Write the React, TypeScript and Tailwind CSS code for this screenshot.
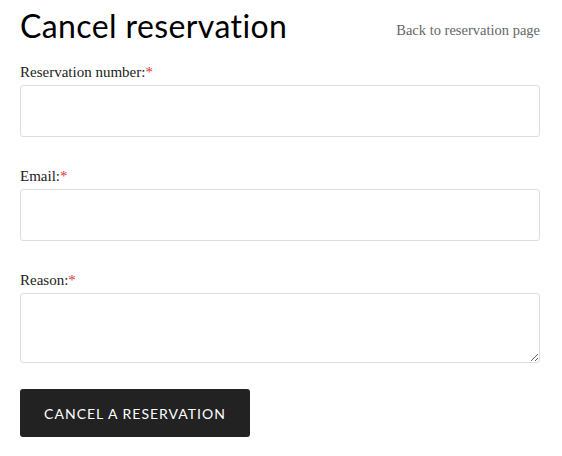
import React from 'react';

const Label: React.FC<{ text: string }> = ({ text }) => (
  <label className="block text-[15px] leading-[20px] text-[#222] mb-[3px]">
    {text}
    <span className="text-[#d33]">*</span>
  </label>
);

const App: React.FC = () => {
  return (
    <div className="w-[562px] h-[456px] bg-white pl-5 pr-[22px] pt-[6px] font-['Liberation_Serif',serif]">
      <div className="flex items-start justify-between">
        <h1 className="font-['Lato',sans-serif] text-[32px] leading-[40px] text-black tracking-[0.4px]">
          Cancel reservation
        </h1>
        <a className="mt-[14px] text-[14.5px] leading-[20px] text-[#666]">Back to reservation page</a>
      </div>

      <form className="mt-[16px] flex flex-col">
        <Label text="Reservation number:" />
        <input className="h-[52px] w-full rounded-[3px] border border-[#ddd] bg-white" />

        <div className="mt-[29px]">
          <Label text="Email:" />
          <input className="h-[52px] w-full rounded-[3px] border border-[#ddd] bg-white" />
        </div>

        <div className="mt-[29px]">
          <Label text="Reason:" />
          <textarea className="block h-[70px] w-full rounded-[3px] border border-[#ddd] bg-white resize-y" />
        </div>

        <button
          type="button"
          className="mt-[26px] h-[48px] w-[230px] rounded-[3px] bg-[#222] text-white font-['Lato',sans-serif] text-[14px] tracking-[1px] uppercase"
        >
          Cancel a reservation
        </button>
      </form>
    </div>
  );
};

export default App;
